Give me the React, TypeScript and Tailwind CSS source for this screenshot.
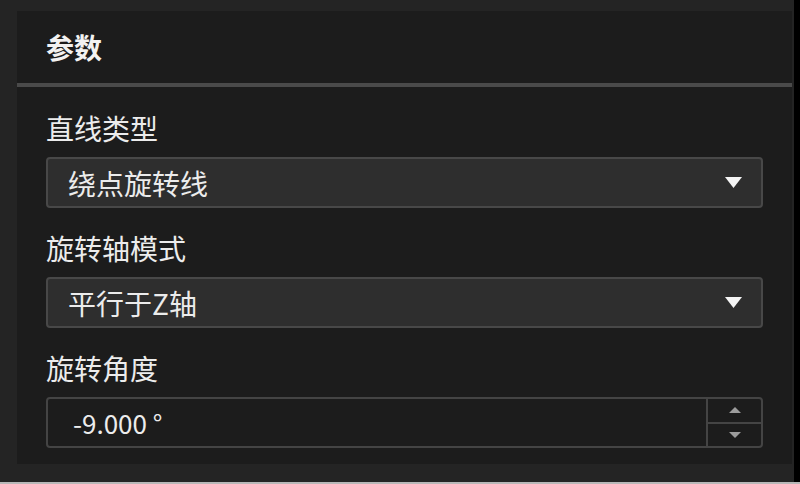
import React from "react";

type SelectProps = { value: string };

const font = { fontFamily: '"Noto Sans CJK SC", "Noto Sans", sans-serif' };

const Select: React.FC<SelectProps> = ({ value }) => (
  <div className="flex items-center justify-between h-[51px] rounded-[4px] border-2 border-[#484848] bg-[#2e2e2e] pl-[20px] pr-[19px]">
    <span className="text-[28px] leading-none text-[#ececec]">{value}</span>
    <svg width="17" height="11" viewBox="0 0 17 11">
      <path d="M0 0 H17 L8.5 11 Z" fill="#f4f4f4" />
    </svg>
  </div>
);

const Field: React.FC<{ label: string; children: React.ReactNode }> = ({ label, children }) => (
  <div className="flex flex-col">
    <div className="h-[40px] leading-[40px] text-[28px] text-[#ececec] mb-[9px]">{label}</div>
    {children}
  </div>
);

export default function App() {
  return (
    <div className="w-[800px] h-[484px] flex flex-col bg-[#242424] overflow-hidden" style={font}>
      <div className="flex flex-1">
        <div className="flex-1 pt-[11px] pl-[17px] pr-[2px] pb-[18px]">
          <div className="h-full bg-[#1c1c1c] flex flex-col">
            <div className="h-[72px] flex items-center px-[29px] text-[28px] font-bold text-[#f2f2f2]">参数</div>
            <div className="h-[4px] bg-[#4a4a4a]" />
            <div className="flex flex-col gap-[20px] px-[29px] pt-[21px]">
              <Field label="直线类型">
                <Select value="绕点旋转线" />
              </Field>
              <Field label="旋转轴模式">
                <Select value="平行于Z轴" />
              </Field>
              <Field label="旋转角度">
                <div className="flex h-[51px] rounded-[4px] border-2 border-[#444444] bg-[#1c1c1c]">
                  <div className="flex-1 flex items-center pl-[25px] text-[26px] leading-none text-[#ececec]">-9.000 °</div>
                  <div className="w-[55px] flex flex-col border-l-2 border-[#444444]">
                    <div className="flex-1 flex items-center justify-center border-b-2 border-[#444444]">
                      <svg width="12" height="6" viewBox="0 0 12 6">
                        <path d="M0 6 H12 L6 0 Z" fill="#9c9c9c" />
                      </svg>
                    </div>
                    <div className="flex-1 flex items-center justify-center">
                      <svg width="12" height="6" viewBox="0 0 12 6">
                        <path d="M0 0 H12 L6 6 Z" fill="#9c9c9c" />
                      </svg>
                    </div>
                  </div>
                </div>
              </Field>
            </div>
          </div>
        </div>
        <div className="w-[6px] bg-black" />
      </div>
      <div className="h-[2px] bg-[#b8b8b8]" />
    </div>
  );
}
